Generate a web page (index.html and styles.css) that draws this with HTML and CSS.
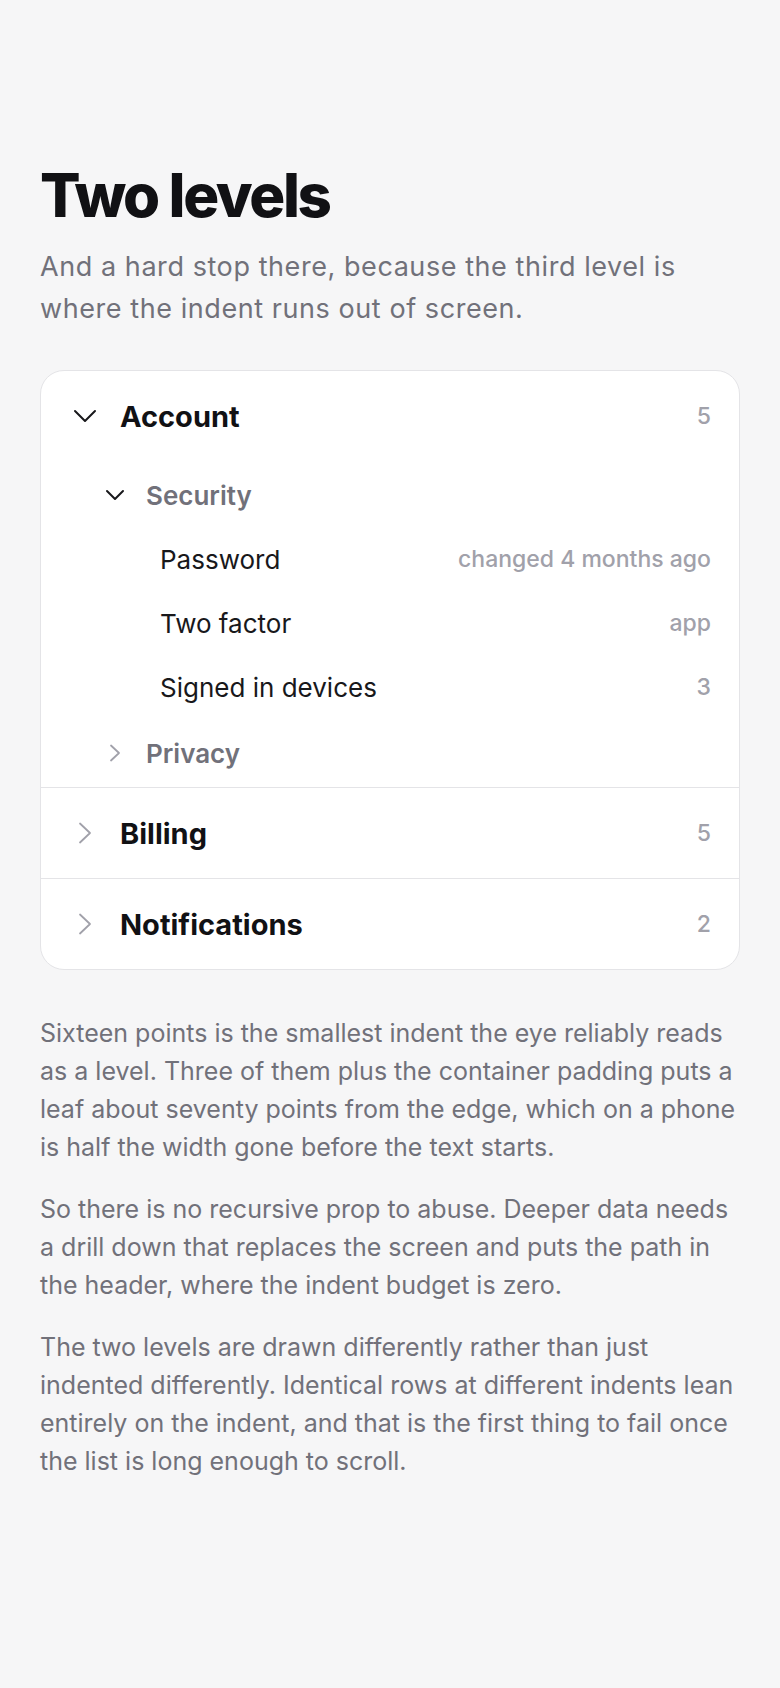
FILE: index.html
```html
<!DOCTYPE html>
<html lang="en">
<head>
<meta charset="utf-8">
<title>Two levels</title>
<link rel="stylesheet" href="styles.css">
</head>
<body>
<main class="page">
  <h1 class="title">Two levels</h1>
  <p class="lede">And a hard stop there, because the third level is where the indent runs out of screen.</p>

  <section class="tree">
    <div class="group">
      <div class="row top">
        <span class="icon">
          <svg viewBox="0 0 24 24" width="24" height="24"><polyline points="2,7 12,17 22,7" class="chev dark"/></svg>
        </span>
        <span class="label">Account</span>
        <span class="count">5</span>
      </div>
      <div class="children">
        <div class="row mid">
          <span class="icon small">
            <svg viewBox="0 0 20 20" width="20" height="20"><polyline points="2,6 10,14 18,6" class="chev dark"/></svg>
          </span>
          <span class="label">Security</span>
        </div>
        <div class="leaves">
          <div class="row leaf"><span class="label">Password</span><span class="meta">changed 4 months ago</span></div>
          <div class="row leaf"><span class="label">Two factor</span><span class="meta">app</span></div>
          <div class="row leaf"><span class="label">Signed in devices</span><span class="meta">3</span></div>
        </div>
        <div class="row mid">
          <span class="icon small">
            <svg viewBox="0 0 20 20" width="20" height="20"><polyline points="6,2.5 14,10 6,17.5" class="chev light"/></svg>
          </span>
          <span class="label">Privacy</span>
        </div>
      </div>
    </div>

    <div class="group">
      <div class="row top">
        <span class="icon">
          <svg viewBox="0 0 24 24" width="24" height="24"><polyline points="7,2.5 17,12 7,21.5" class="chev light"/></svg>
        </span>
        <span class="label">Billing</span>
        <span class="count">5</span>
      </div>
    </div>

    <div class="group">
      <div class="row top">
        <span class="icon">
          <svg viewBox="0 0 24 24" width="24" height="24"><polyline points="7,2.5 17,12 7,21.5" class="chev light"/></svg>
        </span>
        <span class="label">Notifications</span>
        <span class="count">2</span>
      </div>
    </div>
  </section>

  <div class="notes">
    <p>Sixteen points is the smallest indent the eye reliably reads as a level. Three of them plus the container padding puts a leaf about seventy points from the edge, which on a phone is half the width gone before the text starts.</p>
    <p>So there is no recursive prop to abuse. Deeper data needs a drill down that replaces the screen and puts the path in the header, where the indent budget is zero.</p>
    <p>The two levels are drawn differently rather than just indented differently. Identical rows at different indents lean entirely on the indent, and that is the first thing to fail once the list is long enough to scroll.</p>
  </div>
</main>
</body>
</html>
```

FILE: styles.css
```css
* { box-sizing: border-box; }

html, body {
  margin: 0;
  background: #f6f6f7;
}

body {
  font-family: Inter, "Noto Sans", "Liberation Sans", sans-serif;
  color: #18181b;
}

.page {
  padding: 162px 40px 120px;
}

.title {
  margin: 0 0 18px;
  font-size: 60px;
  line-height: 66px;
  font-weight: 800;
  letter-spacing: -0.04em;
  color: #111114;
}

.lede {
  margin: 0 0 40px;
  font-size: 27px;
  line-height: 42px;
  letter-spacing: 0.021em;
  color: #71717a;
}

.tree {
  background: #ffffff;
  border: 1px solid #e4e4e7;
  border-radius: 24px;
  overflow: hidden;
}

.group + .group {
  border-top: 1px solid #e4e4e7;
}

.row {
  display: flex;
  align-items: center;
}

.row .label {
  flex: 1;
}

.icon {
  width: 24px;
  height: 24px;
  display: flex;
  align-items: center;
  justify-content: center;
  flex: none;
}

.icon svg { display: block; }

.icon.small {
  width: 20px;
  height: 20px;
}

.chev {
  fill: none;
  stroke-width: 2;
  stroke-linecap: round;
  stroke-linejoin: round;
}

.chev.dark { stroke: #18181b; }
.chev.light { stroke: #a1a1aa; stroke-width: 1.8; }

.row.top {
  height: 90px;
  padding: 0 28px 0 32px;
  gap: 23px;
}

.row.top .label {
  font-size: 29px;
  font-weight: 700;
  color: #111114;
}

.count {
  font-size: 23px;
  font-weight: 500;
  color: #a1a1aa;
}

.children {
  padding: 2px 0;
}

.row.mid {
  height: 64px;
  padding: 0 28px 0 64px;
  gap: 21px;
}

.row.mid .label {
  font-size: 26px;
  font-weight: 600;
  color: #71717a;
}

.leaves {
  padding-bottom: 2px;
}

.row.leaf {
  height: 64px;
  padding: 0 28px 0 119px;
}

.row.leaf .label {
  font-size: 26px;
  font-weight: 400;
  color: #18181b;
}

.meta {
  font-size: 23px;
  font-weight: 500;
  color: #a1a1aa;
}

.notes {
  margin-top: 44px;
}

.notes p {
  margin: 0 0 24px;
  font-size: 25px;
  line-height: 38px;
  color: #71717a;
}
```
